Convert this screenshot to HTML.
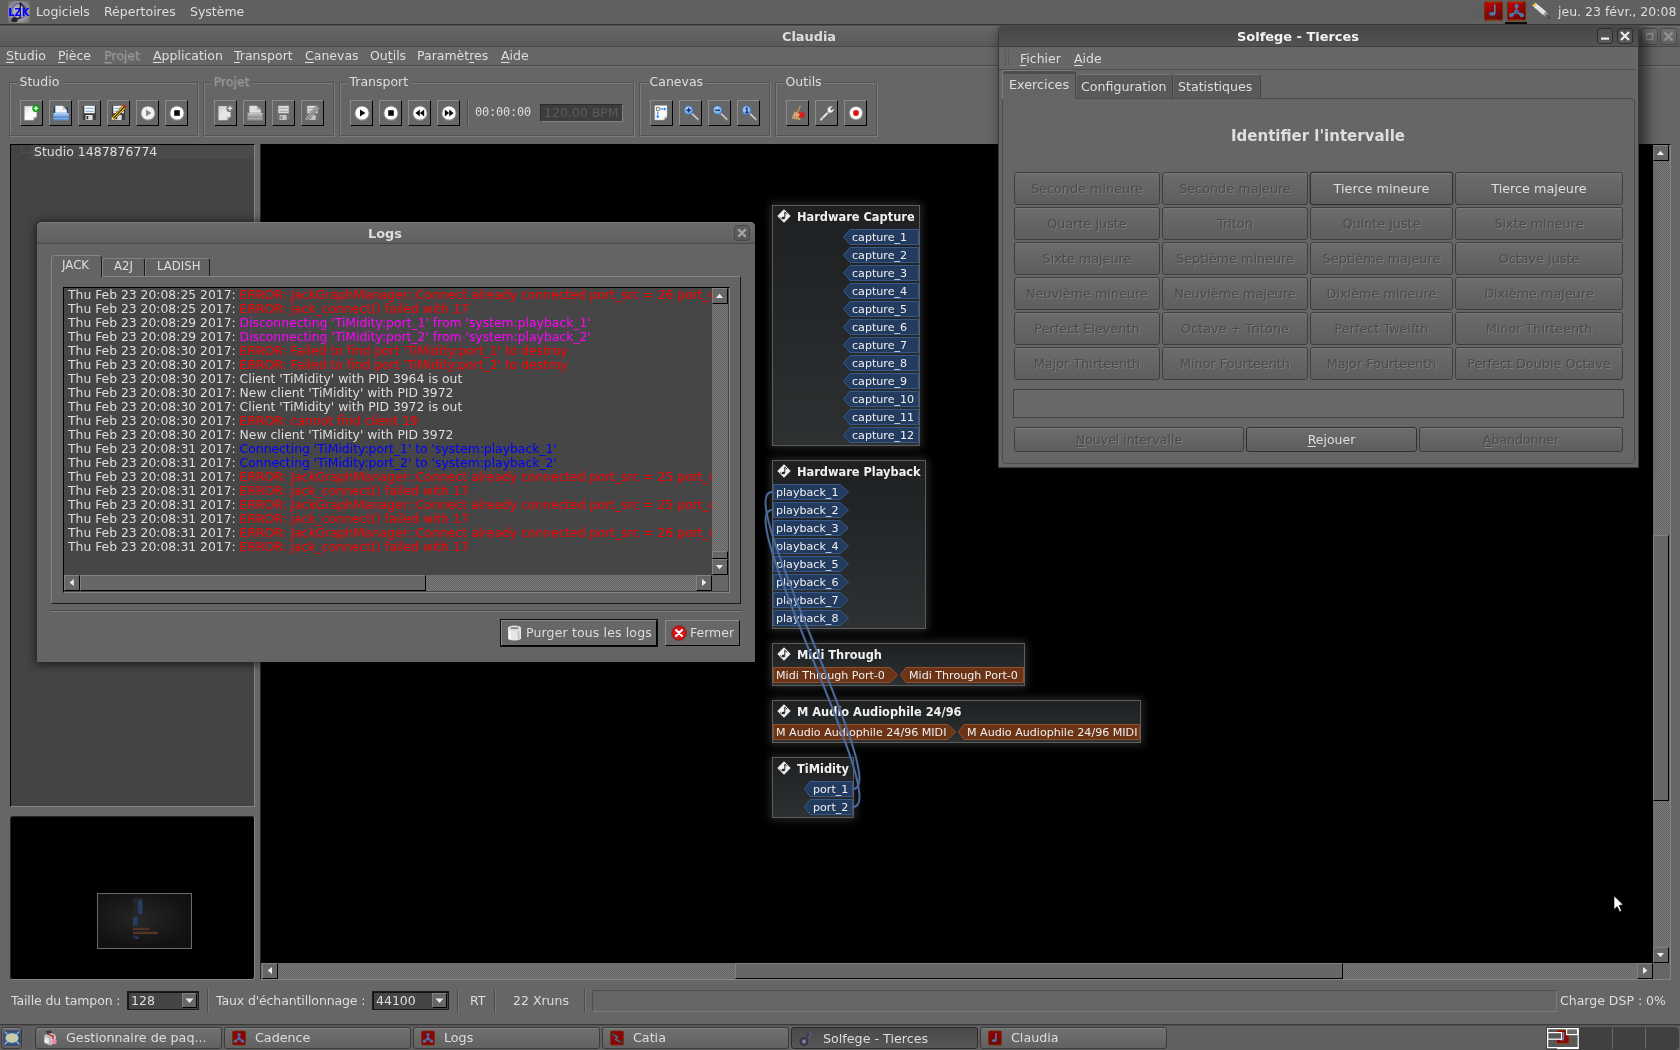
<!DOCTYPE html><html><head><meta charset="utf-8"><title>Claudia</title><style>
html,body{margin:0;padding:0;}
body{width:1680px;height:1050px;overflow:hidden;background:#666;position:relative;font-family:"DejaVu Sans","Liberation Sans",sans-serif;font-size:12.5px;color:#dedede;}
div,span.t,svg{position:absolute;box-sizing:border-box;}
span.t{white-space:nowrap;line-height:15px;height:15px;}
.dis2{color:#4a4a4a;text-shadow:1px 1px 0 #7e7e7e;}
.dis{color:#979797;text-shadow:1px 1px 0 #7c7c7c;}
u{text-decoration:underline;text-underline-offset:1.5px;text-decoration-thickness:1px;}
.b{font-weight:bold;}
.tb{border:1px solid;border-color:#8a8a8a #040404 #040404 #8a8a8a;background:#676767;}
.grp{border:1px solid #555;box-shadow:1px 1px 0 #7c7c7c, inset 1px 1px 0 #7c7c7c;}
.sunk{border:1px solid;border-color:#2a2a2a #8a8a8a #8a8a8a #2a2a2a;}
.trough{background-color:#6e6e6e;background-image:conic-gradient(#787878 25%,#666 0 50%,#787878 0 75%,#666 0);background-size:2px 2px;}
.sbtn{border:1px solid;border-color:#818181 #000 #000 #818181;background:#676767;}
.gbtn{border:1px solid #3e3e3e;border-radius:3px;background:linear-gradient(#6c6c6c,#5e5e5e);box-shadow:inset 0 1px 0 #7a7a7a;}
.task{border:1px solid #3a3a3a;border-radius:3px;background:linear-gradient(#707070,#626262);box-shadow:inset 0 1px 0 #808080;}
</style></head><body><div id="root" style="left:0;top:0;width:1680px;height:1050px;will-change:transform;">
<div style="left:0px;top:26px;width:1680px;height:20px;background:linear-gradient(#666,#5a5a5a);"></div>
<div style="left:0px;top:26px;width:1680px;height:1px;background:#6c6c6c;"></div>
<div style="left:0px;top:46px;width:1680px;height:1px;background:#474747;"></div>
<span class="t" style="left:709px;width:200px;text-align:center;top:29px;font-weight:bold;font-size:12.9px;">Claudia</span>
<div style="left:1641px;top:28px;width:17px;height:17px;border:1px solid #4a4a4a;border-radius:3px;background:linear-gradient(#707070,#606060);"></div>
<svg style="left:1641px;top:28px" width="17" height="17"><rect x="5.5" y="5.5" width="6" height="6" fill="none" stroke="#929292" stroke-width="1.4"/><rect x="5" y="5" width="7" height="2" fill="#929292"/></svg>
<div style="left:1660px;top:28px;width:17px;height:17px;border:1px solid #4a4a4a;border-radius:3px;background:linear-gradient(#707070,#606060);"></div>
<svg style="left:1660px;top:28px" width="17" height="17"><path d="M4.5 4.5 L12.5 12.5 M12.5 4.5 L4.5 12.5" stroke="#929292" stroke-width="2.4" fill="none"/></svg>
<div style="left:0px;top:47px;width:1680px;height:18px;background:#666;"></div>
<div style="left:0px;top:65px;width:1680px;height:1px;background:#4a4a4a;"></div>
<div style="left:0px;top:66px;width:1680px;height:1px;background:#727272;"></div>
<span class="t" style="left:6px;top:48px;"><u>S</u>tudio</span>
<span class="t" style="left:58px;top:48px;"><u>P</u>ièce</span>
<span class="t dis" style="left:104px;top:48px;"><u>P</u>rojet</span>
<span class="t" style="left:153px;top:48px;"><u>A</u>pplication</span>
<span class="t" style="left:234px;top:48px;"><u>T</u>ransport</span>
<span class="t" style="left:305px;top:48px;"><u>C</u>anevas</span>
<span class="t" style="left:370px;top:48px;">Ou<u>t</u>ils</span>
<span class="t" style="left:417px;top:48px;">Paramèt<u>r</u>es</span>
<span class="t" style="left:501px;top:48px;"><u>A</u>ide</span>
<div class="grp" style="left:9px;top:82px;width:189px;height:54px;"></div>
<span class="t" style="left:16.5px;top:74px;background:#666;padding:0 3px 0 3px;">Studio</span>
<div class="grp" style="left:203px;top:82px;width:131px;height:54px;"></div>
<span class="t dis" style="left:210.5px;top:74px;background:#666;padding:0 3px 0 3px;">Projet</span>
<div class="grp" style="left:339px;top:82px;width:295px;height:54px;"></div>
<span class="t" style="left:346.5px;top:74px;background:#666;padding:0 3px 0 3px;">Transport</span>
<div class="grp" style="left:639px;top:82px;width:131px;height:54px;"></div>
<span class="t" style="left:646.5px;top:74px;background:#666;padding:0 3px 0 3px;">Canevas</span>
<div class="grp" style="left:775px;top:82px;width:102px;height:54px;"></div>
<span class="t" style="left:782.5px;top:74px;background:#666;padding:0 3px 0 3px;">Outils</span>
<div class="tb" style="left:20px;top:100px;width:23px;height:26px;"></div>
<svg style="left:23.5px;top:105px;overflow:visible" width="16" height="16" viewBox="0 0 16 16"><defs><linearGradient id="pgfbfbfb" x1="0" y1="0" x2="1" y2="1"><stop offset="0" stop-color="#dcdcdc"/><stop offset="0.5" stop-color="#fbfbfb"/><stop offset="1" stop-color="#fbfbfb"/></linearGradient></defs>
<path d="M0.3 1 H12.8 V11.5 L9 15.3 H0.3 Z" fill="url(#pgfbfbfb)" stroke="#8a8a8a" stroke-width="0.4"/><path d="M12.8 11.5 L9 15.3 L9.4 12 Z" fill="#b8b8b8"/>
<circle cx="12" cy="3.4" r="3.5" fill="#12a812" stroke="#0c8a0c" stroke-width="0.5"/><path d="M9.8 3.4 H14.2 M12 1.2 V5.6" stroke="#fff" stroke-width="1.4"/></svg>
<div class="tb" style="left:49px;top:100px;width:23px;height:26px;"></div>
<svg style="left:52.5px;top:105px;overflow:visible" width="16" height="16" viewBox="0 0 16 16"><path d="M0.8 1.2 L2.2 1.2 L2.2 9 L15 9 L15 2.4 L12 2.4 L12 9 L0.8 9 Z" fill="#173f7c"/>
<path d="M2.4 0.8 H9.6 L13.8 5 V9.5 H2.4 Z" fill="#f4f4f4"/><path d="M9.6 0.8 V5 H13.8 Z" fill="#cfcfcf"/>
<path d="M0.6 8.6 L3 7.4 H13 L15.6 8.6 V15.2 H0.6 Z" fill="#86b0e6"/><path d="M0.6 8.8 H15.6" stroke="#b8d4f4" stroke-width="1.2"/><path d="M0.6 12.2 H15.6" stroke="#3f78c4" stroke-width="1"/>
<path d="M0.6 14.8 H15.6" stroke="#3f78c4" stroke-width="0.8"/></svg>
<div class="tb" style="left:78px;top:100px;width:23px;height:26px;"></div>
<svg style="left:81.5px;top:105px;overflow:visible" width="16" height="16" viewBox="0 0 16 16"><path d="M0.8 2 Q0.8 0.8 2 0.8 H13 Q14.2 0.8 14.2 2 V13.8 Q14.2 15 13 15 H2 Q0.8 15 0.8 13.8 Z" fill="#3e3e3e"/>
<rect x="2.3" y="0.8" width="10.4" height="7.4" fill="#f4f8fe"/><path d="M3.4 3.3 H11.6 M3.4 6.3 H11.6" stroke="#7c9cc6" stroke-width="0.9"/>
<rect x="3.6" y="10" width="7" height="5" fill="#dcdcdc"/><rect x="4.6" y="11" width="1.6" height="3.2" fill="#2e2e2e"/></svg>
<div class="tb" style="left:107px;top:100px;width:23px;height:26px;"></div>
<svg style="left:110.5px;top:105px;overflow:visible" width="16" height="16" viewBox="0 0 16 16"><path d="M0.8 2 Q0.8 0.8 2 0.8 H13 Q14.2 0.8 14.2 2 V13.8 Q14.2 15 13 15 H2 Q0.8 15 0.8 13.8 Z" fill="#3e3e3e"/>
<rect x="2.3" y="0.8" width="10.4" height="7.4" fill="#f4f8fe"/><path d="M3.4 3.3 H11.6 M3.4 6.3 H11.6" stroke="#7c9cc6" stroke-width="0.9"/>
<rect x="3.6" y="10" width="7" height="5" fill="#dcdcdc"/><rect x="4.6" y="11" width="1.6" height="3.2" fill="#2e2e2e"/><path d="M-0.2 15.6 L1 12.2 L11.8 0.6 L14.6 3.2 L3.6 14.6 Z" fill="#f4c41c" stroke="#4a3a06" stroke-width="0.7"/><path d="M2.4 13.4 L13.2 1.9" stroke="#1e1e1e" stroke-width="1.1"/><path d="M11.8 0.6 L12.6 -0.2 Q14.6 -0.6 15.4 1.6 L14.6 3.2 Z" fill="#e01818"/><path d="M-0.2 15.6 L1 12.2 L3.6 14.6 Z" fill="#ecd0a4"/><path d="M-0.2 15.6 L0.3 14.2 L1.2 15.1 Z" fill="#222"/></svg>
<div class="tb" style="left:136px;top:100px;width:23px;height:26px;"></div>
<svg style="left:139.5px;top:105px;overflow:visible" width="16" height="16" viewBox="0 0 16 16"><circle cx="8" cy="8.4" r="7.6" fill="#9c9c9c" opacity="0.5"/><circle cx="8" cy="8" r="6.6" fill="#f2f2f2"/><path d="M6 4.4 L11.4 8 L6 11.6 Z" fill="#8c8c8c"/></svg>
<div class="tb" style="left:165px;top:100px;width:23px;height:26px;"></div>
<svg style="left:168.5px;top:105px;overflow:visible" width="16" height="16" viewBox="0 0 16 16"><circle cx="8" cy="8.4" r="7.6" fill="#a8a8a8" opacity="0.5"/><circle cx="8" cy="8" r="6.6" fill="#fff"/><rect x="5.2" y="5.2" width="5.6" height="5.6" fill="#0c0c0c"/></svg>
<div class="tb" style="left:214px;top:100px;width:23px;height:26px;"></div>
<svg style="left:217.5px;top:105px;overflow:visible" width="16" height="16" viewBox="0 0 16 16"><defs><linearGradient id="pge6e6e6" x1="0" y1="0" x2="1" y2="1"><stop offset="0" stop-color="#cfcfcf"/><stop offset="0.5" stop-color="#e6e6e6"/><stop offset="1" stop-color="#e6e6e6"/></linearGradient></defs>
<path d="M0.3 1 H12.8 V11.5 L9 15.3 H0.3 Z" fill="url(#pge6e6e6)" stroke="#8a8a8a" stroke-width="0.4"/><path d="M12.8 11.5 L9 15.3 L9.4 12 Z" fill="#a8a8a8"/>
<circle cx="12" cy="3.4" r="3.5" fill="#7a7a7a" stroke="#707070" stroke-width="0.5"/><path d="M9.8 3.4 H14.2 M12 1.2 V5.6" stroke="#e8e8e8" stroke-width="1.4"/></svg>
<div class="tb" style="left:243px;top:100px;width:23px;height:26px;"></div>
<svg style="left:246.5px;top:105px;overflow:visible" width="16" height="16" viewBox="0 0 16 16"><path d="M0.8 1.2 L2.2 1.2 L2.2 9 L15 9 L15 2.4 L12 2.4 L12 9 L0.8 9 Z" fill="#6c6c6c"/>
<path d="M2.4 0.8 H9.6 L13.8 5 V9.5 H2.4 Z" fill="#e0e0e0"/><path d="M9.6 0.8 V5 H13.8 Z" fill="#b8b8b8"/>
<path d="M0.6 8.6 L3 7.4 H13 L15.6 8.6 V15.2 H0.6 Z" fill="#a8a8a8"/><path d="M0.6 8.8 H15.6" stroke="#c8c8c8" stroke-width="1.2"/><path d="M0.6 12.2 H15.6" stroke="#888" stroke-width="1"/>
<path d="M0.6 14.8 H15.6" stroke="#888" stroke-width="0.8"/></svg>
<div class="tb" style="left:272px;top:100px;width:23px;height:26px;"></div>
<svg style="left:275.5px;top:105px;overflow:visible" width="16" height="16" viewBox="0 0 16 16"><path d="M0.8 2 Q0.8 0.8 2 0.8 H13 Q14.2 0.8 14.2 2 V13.8 Q14.2 15 13 15 H2 Q0.8 15 0.8 13.8 Z" fill="#707070"/>
<rect x="2.3" y="0.8" width="10.4" height="7.4" fill="#dadada"/><path d="M3.4 3.3 H11.6 M3.4 6.3 H11.6" stroke="#9c9c9c" stroke-width="0.9"/>
<rect x="3.6" y="10" width="7" height="5" fill="#c4c4c4"/><rect x="4.6" y="11" width="1.6" height="3.2" fill="#7c7c7c"/></svg>
<div class="tb" style="left:301px;top:100px;width:23px;height:26px;"></div>
<svg style="left:304.5px;top:105px;overflow:visible" width="16" height="16" viewBox="0 0 16 16"><path d="M0.8 2 Q0.8 0.8 2 0.8 H13 Q14.2 0.8 14.2 2 V13.8 Q14.2 15 13 15 H2 Q0.8 15 0.8 13.8 Z" fill="#707070"/>
<rect x="2.3" y="0.8" width="10.4" height="7.4" fill="#dadada"/><path d="M3.4 3.3 H11.6 M3.4 6.3 H11.6" stroke="#9c9c9c" stroke-width="0.9"/>
<rect x="3.6" y="10" width="7" height="5" fill="#c4c4c4"/><rect x="4.6" y="11" width="1.6" height="3.2" fill="#7c7c7c"/><path d="M-0.2 15.6 L1 12.2 L11.8 0.6 L14.6 3.2 L3.6 14.6 Z" fill="#b0b0b0" stroke="#6a6a6a" stroke-width="0.7"/><path d="M2.4 13.4 L13.2 1.9" stroke="#7c7c7c" stroke-width="1.1"/></svg>
<div class="tb" style="left:350px;top:100px;width:23px;height:26px;"></div>
<svg style="left:353.5px;top:105px;overflow:visible" width="16" height="16" viewBox="0 0 16 16"><circle cx="8" cy="8.4" r="7.6" fill="#a8a8a8" opacity="0.5"/><circle cx="8" cy="8" r="6.6" fill="#fff"/><path d="M6 4.4 L11.4 8 L6 11.6 Z" fill="#0c0c0c"/></svg>
<div class="tb" style="left:379px;top:100px;width:23px;height:26px;"></div>
<svg style="left:382.5px;top:105px;overflow:visible" width="16" height="16" viewBox="0 0 16 16"><circle cx="8" cy="8.4" r="7.6" fill="#a8a8a8" opacity="0.5"/><circle cx="8" cy="8" r="6.6" fill="#fff"/><rect x="5.2" y="5.2" width="5.6" height="5.6" fill="#0c0c0c"/></svg>
<div class="tb" style="left:408px;top:100px;width:23px;height:26px;"></div>
<svg style="left:411.5px;top:105px;overflow:visible" width="16" height="16" viewBox="0 0 16 16"><circle cx="8" cy="8.4" r="7.6" fill="#a8a8a8" opacity="0.5"/><circle cx="8" cy="8" r="6.6" fill="#fff"/><path d="M7.8 4.6 L3.4 8 L7.8 11.4 Z M12.2 4.6 L7.8 8 L12.2 11.4 Z" fill="#0c0c0c"/></svg>
<div class="tb" style="left:437px;top:100px;width:23px;height:26px;"></div>
<svg style="left:440.5px;top:105px;overflow:visible" width="16" height="16" viewBox="0 0 16 16"><circle cx="8" cy="8.4" r="7.6" fill="#a8a8a8" opacity="0.5"/><circle cx="8" cy="8" r="6.6" fill="#fff"/><path d="M3.8 4.6 L8.2 8 L3.8 11.4 Z M8.2 4.6 L12.6 8 L8.2 11.4 Z" fill="#0c0c0c"/></svg>
<div style="left:467px;top:100px;width:1px;height:26px;background:#4a4a4a;"></div>
<div style="left:468px;top:100px;width:1px;height:26px;background:#7a7a7a;"></div>
<span class="t" style="left:475px;top:105px;font-family:'DejaVu Sans Mono','Liberation Mono',monospace;font-size:12px;letter-spacing:-0.22px;">00:00:00</span>
<div style="left:540px;top:104px;width:83px;height:18px;background:#3d3d3d;border:1px solid;border-color:#2c2c2c #808080 #808080 #2c2c2c;"></div>
<span class="t" style="left:544px;top:105px;color:#5c5c5c;">120,00 BPM</span>
<div class="tb" style="left:650px;top:100px;width:23px;height:26px;"></div>
<svg style="left:653.5px;top:105px;overflow:visible" width="16" height="16" viewBox="0 0 16 16"><path d="M0.8 0.6 H13 V11.6 L9.8 15 H0.8 Z" fill="#fafafa" stroke="#b4b4b4" stroke-width="0.5"/><path d="M13 11.6 H9.8 V15 Z" fill="#cfcfcf"/>
<rect x="2.4" y="2.6" width="2.8" height="2.8" fill="none" stroke="#707070" stroke-width="0.8"/>
<path d="M6 4 H11" stroke="#1a78f0" stroke-width="1"/><path d="M10 2.4 L12.4 4 L10 5.6 Z" fill="#1a78f0"/>
<path d="M3.8 6.4 V12" stroke="#1a78f0" stroke-width="1"/><path d="M2.2 11 L3.8 13.4 L5.4 11 Z" fill="#1a78f0"/></svg>
<div class="tb" style="left:679px;top:100px;width:23px;height:26px;"></div>
<svg style="left:682.5px;top:105px;overflow:visible" width="16" height="16" viewBox="0 0 16 16"><defs><radialGradient id="zg" cx="40%" cy="35%" r="70%"><stop offset="0" stop-color="#b8d8f6"/><stop offset="1" stop-color="#5e9ad8"/></radialGradient></defs>
<path d="M9 8.8 L15 14.6" stroke="#808080" stroke-width="2.4" stroke-linecap="round"/><path d="M9 8.6 L14.8 14.2" stroke="#e4e4e4" stroke-width="1.1" stroke-linecap="round"/>
<circle cx="5.6" cy="5.2" r="4.5" fill="url(#zg)" stroke="#3868a8" stroke-width="0.9"/><path d="M3.2 5.2 H8 M5.6 2.8 V7.6" stroke="#0c3472" stroke-width="1.4"/></svg>
<div class="tb" style="left:708px;top:100px;width:23px;height:26px;"></div>
<svg style="left:711.5px;top:105px;overflow:visible" width="16" height="16" viewBox="0 0 16 16"><defs><radialGradient id="zg" cx="40%" cy="35%" r="70%"><stop offset="0" stop-color="#b8d8f6"/><stop offset="1" stop-color="#5e9ad8"/></radialGradient></defs>
<path d="M9 8.8 L15 14.6" stroke="#808080" stroke-width="2.4" stroke-linecap="round"/><path d="M9 8.6 L14.8 14.2" stroke="#e4e4e4" stroke-width="1.1" stroke-linecap="round"/>
<circle cx="5.6" cy="5.2" r="4.5" fill="url(#zg)" stroke="#3868a8" stroke-width="0.9"/><path d="M3.2 5.2 H8" stroke="#0c3472" stroke-width="1.4"/></svg>
<div class="tb" style="left:737px;top:100px;width:23px;height:26px;"></div>
<svg style="left:740.5px;top:105px;overflow:visible" width="16" height="16" viewBox="0 0 16 16"><defs><radialGradient id="zg" cx="40%" cy="35%" r="70%"><stop offset="0" stop-color="#b8d8f6"/><stop offset="1" stop-color="#5e9ad8"/></radialGradient></defs>
<path d="M9 8.8 L15 14.6" stroke="#808080" stroke-width="2.4" stroke-linecap="round"/><path d="M9 8.6 L14.8 14.2" stroke="#e4e4e4" stroke-width="1.1" stroke-linecap="round"/>
<circle cx="5.6" cy="5.2" r="4.5" fill="url(#zg)" stroke="#3868a8" stroke-width="0.9"/><path d="M4.5 4 L5.9 3 V7.4 M4.4 7.5 H7.4" stroke="#0c3472" stroke-width="1.3" fill="none"/></svg>
<div class="tb" style="left:786px;top:100px;width:23px;height:26px;"></div>
<svg style="left:789.5px;top:105px;overflow:visible" width="16" height="16" viewBox="0 0 16 16"><path d="M9.6 0.2 L11.2 0.8 L8.4 8 L6.8 7.4 Z" fill="#b98a52"/><path d="M4.6 6.6 L10 8.6 L9.6 10.4 L10.4 15 L1.6 13.8 Q1 13 3 10 Z" fill="#cfa878"/><path d="M3.4 11 L2.8 13.8 M5.6 11.4 L5.2 14.2 M7.8 11.8 L7.6 14.6" stroke="#9a7444" stroke-width="0.7"/>
<path d="M9.2 7.2 L14.4 12.4 M14.4 7.2 L9.2 12.4" stroke="#e41818" stroke-width="2.2"/></svg>
<div class="tb" style="left:815px;top:100px;width:23px;height:26px;"></div>
<svg style="left:818.5px;top:105px;overflow:visible" width="16" height="16" viewBox="0 0 16 16"><path d="M2 14.6 L9.4 7" stroke="#5a5a5a" stroke-width="3.6" stroke-linecap="round"/><path d="M2 14.6 L9.4 7" stroke="#e8e8e8" stroke-width="2.2" stroke-linecap="round"/>
<path d="M8.4 7.6 Q7.2 3.8 10 1.6 Q12.2 0.4 14.2 1.2 L11.6 3.8 L12.6 5.2 L15.2 2.8 Q15.8 5.6 13.8 7.2 Q11.4 9 8.4 7.6 Z" fill="#f0f0f0" stroke="#5a5a5a" stroke-width="0.7"/>
<path d="M2.4 14.2 L4.6 12" stroke="#9a9a9a" stroke-width="1"/></svg>
<div class="tb" style="left:844px;top:100px;width:23px;height:26px;"></div>
<svg style="left:847.5px;top:105px;overflow:visible" width="16" height="16" viewBox="0 0 16 16"><circle cx="8" cy="8.3" r="7" fill="#b0b0b0" opacity="0.5"/><circle cx="8" cy="8" r="6.2" fill="#fbfbfb"/><circle cx="8" cy="8" r="2.9" fill="#e01010"/></svg>
<div style="left:10px;top:144px;width:245px;height:663px;background:#444;border:1px solid;border-color:#000 #868686 #868686 #000;"></div>
<div style="left:31px;top:145px;width:223px;height:14px;background:#4a4a4a;"></div>
<span class="t" style="left:34px;top:144px;">Studio 1487876774</span>
<svg style="left:18px;top:146px" width="14" height="12"><path d="M3.5 0 V6.5 H12" stroke="#585858" stroke-dasharray="1 1" fill="none"/></svg>
<div style="left:10px;top:816px;width:245px;height:164px;background:#000;border:1px solid;border-color:#262626 #868686 #868686 #262626;border-radius:3px;"></div>
<div style="left:97px;top:893px;width:95px;height:56px;background:#141414;border:1px solid #6a6a6a;"></div>
<svg style="left:98px;top:894px" width="93" height="54" viewBox="0 0 93 54">
<defs><radialGradient id="mg" cx="45%" cy="45%" r="55%"><stop offset="0" stop-color="#262626"/><stop offset="1" stop-color="#121212"/></radialGradient></defs>
<rect width="93" height="54" fill="url(#mg)"/><g opacity="0.7">
<rect x="35" y="4" width="9.5" height="16" fill="#262a2c"/><rect x="40" y="6" width="4.5" height="14" fill="#2b4a7c"/>
<rect x="35" y="21" width="10" height="11" fill="#262a2c"/><rect x="35" y="23" width="4.5" height="9" fill="#2b4a7c"/>
<rect x="35" y="33" width="16.5" height="3" fill="#2a2c2c"/><rect x="35" y="34.5" width="16.5" height="1.3" fill="#8a4520"/>
<rect x="35" y="37" width="24.5" height="3" fill="#2a2c2c"/><rect x="35" y="38.5" width="24.5" height="1.3" fill="#9a4c22"/>
<rect x="35" y="41" width="5.5" height="4" fill="#262a2c"/><rect x="37" y="42.5" width="3.5" height="2.5" fill="#2b4a7c"/>
</g></svg>
<div style="left:260px;top:144px;width:1411px;height:836px;background:#000;border:1px solid;border-color:#000 #868686 #868686 #2a2a2a;"></div>
<div class="trough" style="left:1653px;top:145px;width:17px;height:818px;"></div>
<div class="sbtn" style="left:1653px;top:145px;width:16px;height:16px;"></div>
<svg style="left:1653px;top:145px" width="16" height="16"><path d="M4 10 L7.5 5.7 L11 10 Z" fill="#ececec"/></svg>
<div class="sbtn" style="left:1653px;top:947px;width:16px;height:16px;"></div>
<svg style="left:1653px;top:947px" width="16" height="16"><path d="M4 6 L7.5 10.3 L11 6 Z" fill="#ececec"/></svg>
<div class="sbtn" style="left:1653px;top:535px;width:16px;height:266px;"></div>
<div class="trough" style="left:261px;top:963px;width:1392px;height:16px;"></div>
<div class="sbtn" style="left:262px;top:963px;width:16px;height:16px;"></div>
<svg style="left:262px;top:963px" width="16" height="16"><path d="M10 4 L5.7 7.5 L10 11 Z" fill="#ececec"/></svg>
<div class="sbtn" style="left:1637px;top:963px;width:16px;height:16px;"></div>
<svg style="left:1637px;top:963px" width="16" height="16"><path d="M6 4 L10.3 7.5 L6 11 Z" fill="#ececec"/></svg>
<div class="sbtn" style="left:735px;top:963px;width:608px;height:16px;"></div>
<div style="left:1653px;top:963px;width:17px;height:16px;background:#666;"></div>
<div style="left:772px;top:205px;width:148px;height:241px;background:linear-gradient(#1e2022,#2d3132);border:1px solid #5c5c5c;box-shadow:0 0 8px 2px rgba(130,130,130,0.30);"></div>
<svg style="left:777px;top:209px" width="14" height="14" viewBox="0 0 14 14"><path d="M7 0.3 L13.7 7 L7 13.7 L0.3 7 Z" fill="#f0f0f0"/><path d="M7.8 3.2 V8.6 M7.8 3.2 L10 5.2" stroke="#222" stroke-width="1" fill="none"/><ellipse cx="6.4" cy="9" rx="1.7" ry="1.3" fill="#222"/><path d="M3.2 8.2 L5 10.4" stroke="#555" stroke-width="0.8"/></svg>
<span class="t b" style="left:797px;top:210px;font-size:11.4px;color:#f0f0f0;">Hardware Capture</span>
<svg style="left:842px;top:229px" width="78" height="16"><path d="M8 0.5 H76.5 V15.5 H8 L1.5 8.0 Z" fill="#243b60" stroke="#38588a" stroke-width="1"/></svg>
<span class="t" style="left:852px;top:230px;font-size:11.1px;color:#f0f0f0;line-height:16px;height:16px;">capture_1</span>
<svg style="left:842px;top:247px" width="78" height="16"><path d="M8 0.5 H76.5 V15.5 H8 L1.5 8.0 Z" fill="#243b60" stroke="#38588a" stroke-width="1"/></svg>
<span class="t" style="left:852px;top:248px;font-size:11.1px;color:#f0f0f0;line-height:16px;height:16px;">capture_2</span>
<svg style="left:842px;top:265px" width="78" height="16"><path d="M8 0.5 H76.5 V15.5 H8 L1.5 8.0 Z" fill="#243b60" stroke="#38588a" stroke-width="1"/></svg>
<span class="t" style="left:852px;top:266px;font-size:11.1px;color:#f0f0f0;line-height:16px;height:16px;">capture_3</span>
<svg style="left:842px;top:283px" width="78" height="16"><path d="M8 0.5 H76.5 V15.5 H8 L1.5 8.0 Z" fill="#243b60" stroke="#38588a" stroke-width="1"/></svg>
<span class="t" style="left:852px;top:284px;font-size:11.1px;color:#f0f0f0;line-height:16px;height:16px;">capture_4</span>
<svg style="left:842px;top:301px" width="78" height="16"><path d="M8 0.5 H76.5 V15.5 H8 L1.5 8.0 Z" fill="#243b60" stroke="#38588a" stroke-width="1"/></svg>
<span class="t" style="left:852px;top:302px;font-size:11.1px;color:#f0f0f0;line-height:16px;height:16px;">capture_5</span>
<svg style="left:842px;top:319px" width="78" height="16"><path d="M8 0.5 H76.5 V15.5 H8 L1.5 8.0 Z" fill="#243b60" stroke="#38588a" stroke-width="1"/></svg>
<span class="t" style="left:852px;top:320px;font-size:11.1px;color:#f0f0f0;line-height:16px;height:16px;">capture_6</span>
<svg style="left:842px;top:337px" width="78" height="16"><path d="M8 0.5 H76.5 V15.5 H8 L1.5 8.0 Z" fill="#243b60" stroke="#38588a" stroke-width="1"/></svg>
<span class="t" style="left:852px;top:338px;font-size:11.1px;color:#f0f0f0;line-height:16px;height:16px;">capture_7</span>
<svg style="left:842px;top:355px" width="78" height="16"><path d="M8 0.5 H76.5 V15.5 H8 L1.5 8.0 Z" fill="#243b60" stroke="#38588a" stroke-width="1"/></svg>
<span class="t" style="left:852px;top:356px;font-size:11.1px;color:#f0f0f0;line-height:16px;height:16px;">capture_8</span>
<svg style="left:842px;top:373px" width="78" height="16"><path d="M8 0.5 H76.5 V15.5 H8 L1.5 8.0 Z" fill="#243b60" stroke="#38588a" stroke-width="1"/></svg>
<span class="t" style="left:852px;top:374px;font-size:11.1px;color:#f0f0f0;line-height:16px;height:16px;">capture_9</span>
<svg style="left:842px;top:391px" width="78" height="16"><path d="M8 0.5 H76.5 V15.5 H8 L1.5 8.0 Z" fill="#243b60" stroke="#38588a" stroke-width="1"/></svg>
<span class="t" style="left:852px;top:392px;font-size:11.1px;color:#f0f0f0;line-height:16px;height:16px;">capture_10</span>
<svg style="left:842px;top:409px" width="78" height="16"><path d="M8 0.5 H76.5 V15.5 H8 L1.5 8.0 Z" fill="#243b60" stroke="#38588a" stroke-width="1"/></svg>
<span class="t" style="left:852px;top:410px;font-size:11.1px;color:#f0f0f0;line-height:16px;height:16px;">capture_11</span>
<svg style="left:842px;top:427px" width="78" height="16"><path d="M8 0.5 H76.5 V15.5 H8 L1.5 8.0 Z" fill="#243b60" stroke="#38588a" stroke-width="1"/></svg>
<span class="t" style="left:852px;top:428px;font-size:11.1px;color:#f0f0f0;line-height:16px;height:16px;">capture_12</span>
<div style="left:772px;top:460px;width:154px;height:169px;background:linear-gradient(#1e2022,#2d3132);border:1px solid #5c5c5c;box-shadow:0 0 8px 2px rgba(130,130,130,0.30);"></div>
<svg style="left:777px;top:464px" width="14" height="14" viewBox="0 0 14 14"><path d="M7 0.3 L13.7 7 L7 13.7 L0.3 7 Z" fill="#f0f0f0"/><path d="M7.8 3.2 V8.6 M7.8 3.2 L10 5.2" stroke="#222" stroke-width="1" fill="none"/><ellipse cx="6.4" cy="9" rx="1.7" ry="1.3" fill="#222"/><path d="M3.2 8.2 L5 10.4" stroke="#555" stroke-width="0.8"/></svg>
<span class="t b" style="left:797px;top:465px;font-size:11.4px;color:#f0f0f0;">Hardware Playback</span>
<svg style="left:773px;top:484px" width="78" height="16"><path d="M0.5 0.5 H67 L75.5 8.0 L67 15.5 H0.5 Z" fill="#243b60" stroke="#38588a" stroke-width="1"/></svg>
<span class="t" style="left:776px;top:485px;font-size:11.1px;color:#f0f0f0;line-height:16px;height:16px;">playback_1</span>
<svg style="left:773px;top:502px" width="78" height="16"><path d="M0.5 0.5 H67 L75.5 8.0 L67 15.5 H0.5 Z" fill="#243b60" stroke="#38588a" stroke-width="1"/></svg>
<span class="t" style="left:776px;top:503px;font-size:11.1px;color:#f0f0f0;line-height:16px;height:16px;">playback_2</span>
<svg style="left:773px;top:520px" width="78" height="16"><path d="M0.5 0.5 H67 L75.5 8.0 L67 15.5 H0.5 Z" fill="#243b60" stroke="#38588a" stroke-width="1"/></svg>
<span class="t" style="left:776px;top:521px;font-size:11.1px;color:#f0f0f0;line-height:16px;height:16px;">playback_3</span>
<svg style="left:773px;top:538px" width="78" height="16"><path d="M0.5 0.5 H67 L75.5 8.0 L67 15.5 H0.5 Z" fill="#243b60" stroke="#38588a" stroke-width="1"/></svg>
<span class="t" style="left:776px;top:539px;font-size:11.1px;color:#f0f0f0;line-height:16px;height:16px;">playback_4</span>
<svg style="left:773px;top:556px" width="78" height="16"><path d="M0.5 0.5 H67 L75.5 8.0 L67 15.5 H0.5 Z" fill="#243b60" stroke="#38588a" stroke-width="1"/></svg>
<span class="t" style="left:776px;top:557px;font-size:11.1px;color:#f0f0f0;line-height:16px;height:16px;">playback_5</span>
<svg style="left:773px;top:574px" width="78" height="16"><path d="M0.5 0.5 H67 L75.5 8.0 L67 15.5 H0.5 Z" fill="#243b60" stroke="#38588a" stroke-width="1"/></svg>
<span class="t" style="left:776px;top:575px;font-size:11.1px;color:#f0f0f0;line-height:16px;height:16px;">playback_6</span>
<svg style="left:773px;top:592px" width="78" height="16"><path d="M0.5 0.5 H67 L75.5 8.0 L67 15.5 H0.5 Z" fill="#243b60" stroke="#38588a" stroke-width="1"/></svg>
<span class="t" style="left:776px;top:593px;font-size:11.1px;color:#f0f0f0;line-height:16px;height:16px;">playback_7</span>
<svg style="left:773px;top:610px" width="78" height="16"><path d="M0.5 0.5 H67 L75.5 8.0 L67 15.5 H0.5 Z" fill="#243b60" stroke="#38588a" stroke-width="1"/></svg>
<span class="t" style="left:776px;top:611px;font-size:11.1px;color:#f0f0f0;line-height:16px;height:16px;">playback_8</span>
<div style="left:772px;top:643px;width:253px;height:43px;background:linear-gradient(#1e2022,#2d3132);border:1px solid #5c5c5c;box-shadow:0 0 8px 2px rgba(130,130,130,0.30);"></div>
<svg style="left:777px;top:647px" width="14" height="14" viewBox="0 0 14 14"><path d="M7 0.3 L13.7 7 L7 13.7 L0.3 7 Z" fill="#f0f0f0"/><path d="M7.8 3.2 V8.6 M7.8 3.2 L10 5.2" stroke="#222" stroke-width="1" fill="none"/><ellipse cx="6.4" cy="9" rx="1.7" ry="1.3" fill="#222"/><path d="M3.2 8.2 L5 10.4" stroke="#555" stroke-width="0.8"/></svg>
<span class="t b" style="left:797px;top:648px;font-size:11.4px;color:#f0f0f0;">Midi Through</span>
<svg style="left:773px;top:667px" width="127" height="16"><path d="M0.5 0.5 H117 L124.5 8.0 L117 15.5 H0.5 Z" fill="#6b3417" stroke="#93502a" stroke-width="1"/></svg>
<span class="t" style="left:776px;top:668px;font-size:11.1px;color:#f0f0f0;line-height:16px;height:16px;">Midi Through Port-0</span>
<svg style="left:899px;top:667px" width="126" height="16"><path d="M7 0.5 H124.5 V15.5 H7 L1.5 8.0 Z" fill="#6b3417" stroke="#93502a" stroke-width="1"/></svg>
<span class="t" style="left:909px;top:668px;font-size:11.1px;color:#f0f0f0;line-height:16px;height:16px;">Midi Through Port-0</span>
<div style="left:772px;top:700px;width:369px;height:43px;background:linear-gradient(#1e2022,#2d3132);border:1px solid #5c5c5c;box-shadow:0 0 8px 2px rgba(130,130,130,0.30);"></div>
<svg style="left:777px;top:704px" width="14" height="14" viewBox="0 0 14 14"><path d="M7 0.3 L13.7 7 L7 13.7 L0.3 7 Z" fill="#f0f0f0"/><path d="M7.8 3.2 V8.6 M7.8 3.2 L10 5.2" stroke="#222" stroke-width="1" fill="none"/><ellipse cx="6.4" cy="9" rx="1.7" ry="1.3" fill="#222"/><path d="M3.2 8.2 L5 10.4" stroke="#555" stroke-width="0.8"/></svg>
<span class="t b" style="left:797px;top:705px;font-size:11.4px;color:#f0f0f0;">M Audio Audiophile 24/96</span>
<svg style="left:773px;top:724px" width="185" height="16"><path d="M0.5 0.5 H175 L182.5 8.0 L175 15.5 H0.5 Z" fill="#6b3417" stroke="#93502a" stroke-width="1"/></svg>
<span class="t" style="left:776px;top:725px;font-size:11.1px;color:#f0f0f0;line-height:16px;height:16px;">M Audio Audiophile 24/96 MIDI</span>
<svg style="left:957px;top:724px" width="184" height="16"><path d="M7 0.5 H182.5 V15.5 H7 L1.5 8.0 Z" fill="#6b3417" stroke="#93502a" stroke-width="1"/></svg>
<span class="t" style="left:967px;top:725px;font-size:11.1px;color:#f0f0f0;line-height:16px;height:16px;">M Audio Audiophile 24/96 MIDI</span>
<div style="left:772px;top:757px;width:82px;height:61px;background:linear-gradient(#1e2022,#2d3132);border:1px solid #5c5c5c;box-shadow:0 0 8px 2px rgba(130,130,130,0.30);"></div>
<svg style="left:777px;top:761px" width="14" height="14" viewBox="0 0 14 14"><path d="M7 0.3 L13.7 7 L7 13.7 L0.3 7 Z" fill="#f0f0f0"/><path d="M7.8 3.2 V8.6 M7.8 3.2 L10 5.2" stroke="#222" stroke-width="1" fill="none"/><ellipse cx="6.4" cy="9" rx="1.7" ry="1.3" fill="#222"/><path d="M3.2 8.2 L5 10.4" stroke="#555" stroke-width="0.8"/></svg>
<span class="t b" style="left:797px;top:762px;font-size:11.4px;color:#f0f0f0;">TiMidity</span>
<svg style="left:803px;top:781px" width="51" height="16"><path d="M7 0.5 H49.5 V15.5 H7 L1.5 8.0 Z" fill="#243b60" stroke="#38588a" stroke-width="1"/></svg>
<span class="t" style="left:813px;top:782px;font-size:11.1px;color:#f0f0f0;line-height:16px;height:16px;">port_1</span>
<svg style="left:803px;top:799px" width="51" height="16"><path d="M7 0.5 H49.5 V15.5 H7 L1.5 8.0 Z" fill="#243b60" stroke="#38588a" stroke-width="1"/></svg>
<span class="t" style="left:813px;top:800px;font-size:11.1px;color:#f0f0f0;line-height:16px;height:16px;">port_2</span>
<svg style="left:700px;top:440px" width="240" height="420" viewBox="700 440 240 420"><g fill="none" stroke="#4a6a9c" stroke-width="2">
<path d="M853 789 C893 789 732 492 772 492"/><path d="M853 807 C893 807 732 510 772 510"/></g></svg>
<svg style="left:1612px;top:894px" width="14" height="22" viewBox="0 0 14 22"><path d="M2 1.8 V15.4 L5.2 12.6 L7.7 17.8 L9.6 16.9 L7.2 11.4 L11.2 10.8 Z" fill="#fafafa" stroke="#000" stroke-width="0.6"/></svg>
<div style="left:37px;top:222px;width:718px;height:440px;background:#646464;border-radius:5px 5px 0 0;box-shadow:0 1px 8px 2px rgba(0,0,0,0.55);"></div>
<div style="left:37px;top:222px;width:718px;height:22px;background:linear-gradient(#6c6c6c,#5f5f5f);border-radius:5px 5px 0 0;box-shadow:inset 0 1px 0 #7a7a7a;"></div>
<div style="left:37px;top:243px;width:718px;height:1px;background:#4a4a4a;"></div>
<span class="t" style="left:285px;width:200px;text-align:center;top:226px;font-weight:bold;font-size:12.9px;">Logs</span>
<div style="left:734px;top:225px;width:16px;height:16px;border:1px solid #474747;border-radius:3.5px;background:linear-gradient(#616161,#585858);"></div>
<svg style="left:734px;top:225px" width="16" height="16"><path d="M4.3 4.3 L11.7 11.7 M11.7 4.3 L4.3 11.7" stroke="#a6a6a6" stroke-width="2.3" fill="none"/></svg>
<div style="left:51px;top:276px;width:690px;height:328px;border:1px solid;border-color:#858585 #1c1c1c #1c1c1c #858585;"></div>
<div style="left:102px;top:258px;width:43px;height:18px;border:1px solid;border-color:#808080 #1c1c1c transparent #808080;border-bottom:0;border-radius:3px 3px 0 0;background:#626262;"></div>
<div style="left:145px;top:258px;width:65px;height:18px;border:1px solid;border-color:#808080 #1c1c1c transparent #808080;border-bottom:0;border-radius:3px 3px 0 0;background:#626262;"></div>
<div style="left:51px;top:255px;width:51px;height:22px;border:1px solid;border-color:#858585 #1c1c1c transparent #858585;border-bottom:0;border-radius:4px 4px 0 0;background:#646464;"></div>
<span class="t" style="left:62px;top:258px;font-size:11.8px;">JACK</span>
<span class="t" style="left:114px;top:259px;font-size:11.8px;">A2J</span>
<span class="t" style="left:157px;top:259px;font-size:11.7px;">LADISH</span>
<div style="left:63px;top:287px;width:667px;height:306px;background:#464646;border:1px solid;border-color:#000 #868686 #868686 #000;"></div>
<div style="left:64px;top:288px;width:648px;height:287px;overflow:hidden;">
<span class="t" style="left:4px;top:0px;line-height:14px;height:14px;font-size:12.37px;">Thu Feb 23 20:08:25 2017: <span style="color:#ff0000">ERROR: JackGraphManager::Connect already connected port_src = 26 port_dst = 2</span></span>
<span class="t" style="left:4px;top:14px;line-height:14px;height:14px;font-size:12.37px;">Thu Feb 23 20:08:25 2017: <span style="color:#ff0000">ERROR: jack_connect() failed with 17</span></span>
<span class="t" style="left:4px;top:28px;line-height:14px;height:14px;font-size:12.37px;">Thu Feb 23 20:08:29 2017: <span style="color:#ff00ff">Disconnecting 'TiMidity:port_1' from 'system:playback_1'</span></span>
<span class="t" style="left:4px;top:42px;line-height:14px;height:14px;font-size:12.37px;">Thu Feb 23 20:08:29 2017: <span style="color:#ff00ff">Disconnecting 'TiMidity:port_2' from 'system:playback_2'</span></span>
<span class="t" style="left:4px;top:56px;line-height:14px;height:14px;font-size:12.37px;">Thu Feb 23 20:08:30 2017: <span style="color:#ff0000">ERROR: Failed to find port 'TiMidity:port_1' to destroy</span></span>
<span class="t" style="left:4px;top:70px;line-height:14px;height:14px;font-size:12.37px;">Thu Feb 23 20:08:30 2017: <span style="color:#ff0000">ERROR: Failed to find port 'TiMidity:port_2' to destroy</span></span>
<span class="t" style="left:4px;top:84px;line-height:14px;height:14px;font-size:12.37px;">Thu Feb 23 20:08:30 2017: <span style="color:#dedede">Client 'TiMidity' with PID 3964 is out</span></span>
<span class="t" style="left:4px;top:98px;line-height:14px;height:14px;font-size:12.37px;">Thu Feb 23 20:08:30 2017: <span style="color:#dedede">New client 'TiMidity' with PID 3972</span></span>
<span class="t" style="left:4px;top:112px;line-height:14px;height:14px;font-size:12.37px;">Thu Feb 23 20:08:30 2017: <span style="color:#dedede">Client 'TiMidity' with PID 3972 is out</span></span>
<span class="t" style="left:4px;top:126px;line-height:14px;height:14px;font-size:12.37px;">Thu Feb 23 20:08:30 2017: <span style="color:#ff0000">ERROR: cannot find client 19</span></span>
<span class="t" style="left:4px;top:140px;line-height:14px;height:14px;font-size:12.37px;">Thu Feb 23 20:08:30 2017: <span style="color:#dedede">New client 'TiMidity' with PID 3972</span></span>
<span class="t" style="left:4px;top:154px;line-height:14px;height:14px;font-size:12.37px;">Thu Feb 23 20:08:31 2017: <span style="color:#0000ff">Connecting 'TiMidity:port_1' to 'system:playback_1'</span></span>
<span class="t" style="left:4px;top:168px;line-height:14px;height:14px;font-size:12.37px;">Thu Feb 23 20:08:31 2017: <span style="color:#0000ff">Connecting 'TiMidity:port_2' to 'system:playback_2'</span></span>
<span class="t" style="left:4px;top:182px;line-height:14px;height:14px;font-size:12.37px;">Thu Feb 23 20:08:31 2017: <span style="color:#ff0000">ERROR: JackGraphManager::Connect already connected port_src = 25 port_dst = 1</span></span>
<span class="t" style="left:4px;top:196px;line-height:14px;height:14px;font-size:12.37px;">Thu Feb 23 20:08:31 2017: <span style="color:#ff0000">ERROR: jack_connect() failed with 17</span></span>
<span class="t" style="left:4px;top:210px;line-height:14px;height:14px;font-size:12.37px;">Thu Feb 23 20:08:31 2017: <span style="color:#ff0000">ERROR: JackGraphManager::Connect already connected port_src = 25 port_dst = 1</span></span>
<span class="t" style="left:4px;top:224px;line-height:14px;height:14px;font-size:12.37px;">Thu Feb 23 20:08:31 2017: <span style="color:#ff0000">ERROR: jack_connect() failed with 17</span></span>
<span class="t" style="left:4px;top:238px;line-height:14px;height:14px;font-size:12.37px;">Thu Feb 23 20:08:31 2017: <span style="color:#ff0000">ERROR: JackGraphManager::Connect already connected port_src = 26 port_dst = 2</span></span>
<span class="t" style="left:4px;top:252px;line-height:14px;height:14px;font-size:12.37px;">Thu Feb 23 20:08:31 2017: <span style="color:#ff0000">ERROR: jack_connect() failed with 17</span></span>
</div>
<div class="trough" style="left:712px;top:288px;width:16px;height:287px;"></div>
<div class="sbtn" style="left:712px;top:288px;width:16px;height:16px;"></div>
<svg style="left:712px;top:288px" width="16" height="16"><path d="M4 10 L7.5 5.7 L11 10 Z" fill="#ececec"/></svg>
<div class="sbtn" style="left:712px;top:559px;width:16px;height:16px;"></div>
<svg style="left:712px;top:559px" width="16" height="16"><path d="M4 6 L7.5 10.3 L11 6 Z" fill="#ececec"/></svg>
<div class="sbtn" style="left:712px;top:551px;width:16px;height:8px;"></div>
<div class="trough" style="left:64px;top:575px;width:648px;height:16px;"></div>
<div class="sbtn" style="left:64px;top:575px;width:16px;height:16px;"></div>
<svg style="left:64px;top:575px" width="16" height="16"><path d="M9.8 4 L5.5 7.5 L9.8 11 Z" fill="#ececec"/></svg>
<div class="sbtn" style="left:696px;top:575px;width:16px;height:16px;"></div>
<svg style="left:696px;top:575px" width="16" height="16"><path d="M6 4 L10.3 7.5 L6 11 Z" fill="#ececec"/></svg>
<div class="sbtn" style="left:80px;top:575px;width:346px;height:16px;"></div>
<div style="left:712px;top:575px;width:16px;height:16px;background:#666;"></div>
<div style="left:51px;top:610px;width:690px;height:1px;background:#4a4a4a;"></div>
<div style="left:51px;top:611px;width:690px;height:1px;background:#7c7c7c;"></div>
<div style="left:500px;top:619px;width:158px;height:28px;border:1px solid #0a0a0a;"></div>
<div class="tb" style="left:501px;top:620px;width:156px;height:26px;"></div>
<svg style="left:506px;top:625px" width="17" height="17" viewBox="0 0 17 17"><path d="M2 3 V14 Q8.5 17 15 14 V3 Z" fill="#e6e6e6"/><ellipse cx="8.5" cy="3" rx="6.5" ry="2.2" fill="#fafafa" stroke="#bdbdbd" stroke-width="0.6"/><ellipse cx="8.5" cy="3.1" rx="4.6" ry="1.2" fill="#8a8a8a"/><path d="M4 6 V14.5" stroke="#fff" stroke-width="1.5"/><path d="M12.5 6 V14.5" stroke="#c4c4c4" stroke-width="2"/></svg>
<span class="t" style="left:526px;top:625px;letter-spacing:0.14px;">Purger tous les logs</span>
<div class="tb" style="left:665px;top:620px;width:75px;height:26px;"></div>
<svg style="left:671px;top:625px" width="16" height="16" viewBox="0 0 16 16"><circle cx="8" cy="8" r="7.2" fill="#d81414" stroke="#8a0c0c" stroke-width="0.8"/><path d="M5 5 L11 11 M11 5 L5 11" stroke="#fff" stroke-width="2.1" stroke-linecap="round"/></svg>
<span class="t" style="left:690px;top:625px;">Fermer</span>
<div style="left:998px;top:25px;width:641px;height:443px;background:#666;border-radius:6px 6px 0 0;box-shadow:5px 3px 12px 3px rgba(0,0,0,0.5);border:1px solid #3a3a3a;"></div>
<div style="left:999px;top:26px;width:639px;height:20px;background:linear-gradient(#474747,#525252);border-radius:5px 5px 0 0;"></div>
<div style="left:999px;top:46px;width:639px;height:1px;background:#3e3e3e;"></div>
<span class="t" style="left:1198px;width:200px;text-align:center;top:29px;font-weight:bold;color:#f2f2f2;font-size:12.95px;">Solfege - Tierces</span>
<div style="left:1597px;top:28px;width:16px;height:16px;border:1px solid #2e2e2e;border-radius:3px;background:linear-gradient(#4e4e4e,#585858);"></div>
<svg style="left:1597px;top:28px" width="16" height="16"><rect x="4" y="9.5" width="8" height="2.2" fill="#f0f0f0"/></svg>
<div style="left:1617px;top:28px;width:16px;height:16px;border:1px solid #2e2e2e;border-radius:3px;background:linear-gradient(#4e4e4e,#585858);"></div>
<svg style="left:1617px;top:28px" width="16" height="16"><path d="M4 4 L12 12 M12 4 L4 12" stroke="#ececec" stroke-width="2.2" fill="none"/></svg>
<div style="left:999px;top:47px;width:639px;height:22px;background:#676767;"></div>
<div style="left:999px;top:69px;width:636px;height:1px;background:#505050;"></div>
<svg style="left:1005px;top:50px" width="5" height="17"><g fill="#4c4c4c"><rect x="0" y="0" width="1" height="1"/><rect x="3" y="0" width="1" height="1"/><rect x="0" y="2" width="1" height="1"/><rect x="3" y="2" width="1" height="1"/><rect x="0" y="4" width="1" height="1"/><rect x="3" y="4" width="1" height="1"/><rect x="0" y="6" width="1" height="1"/><rect x="3" y="6" width="1" height="1"/><rect x="0" y="8" width="1" height="1"/><rect x="3" y="8" width="1" height="1"/><rect x="0" y="10" width="1" height="1"/><rect x="3" y="10" width="1" height="1"/><rect x="0" y="12" width="1" height="1"/><rect x="3" y="12" width="1" height="1"/><rect x="0" y="14" width="1" height="1"/><rect x="3" y="14" width="1" height="1"/></g></svg>
<span class="t" style="left:1020px;top:51px;"><u>F</u>ichier</span>
<span class="t" style="left:1074px;top:51px;"><u>A</u>ide</span>
<div style="left:1002px;top:98px;width:633px;height:366px;background:#666;border:1px solid #4c4c4c;border-radius:0 4px 4px 4px;"></div>
<div style="left:1076px;top:74px;width:97px;height:24px;background:#595959;border:1px solid;border-color:#747474 #444 transparent #666;border-bottom:0;border-radius:3px 3px 0 0;"></div>
<div style="left:1173px;top:74px;width:88px;height:24px;background:#595959;border:1px solid;border-color:#747474 #444 transparent #666;border-bottom:0;border-radius:3px 3px 0 0;"></div>
<span class="t" style="left:1081px;top:79px;font-size:12.6px;">Configuration</span>
<span class="t" style="left:1178px;top:79px;font-size:12.6px;">Statistiques</span>
<div style="left:1002px;top:70px;width:74px;height:29px;background:#656565;border:1px solid;border-color:#7e7e7e #454545 transparent #7e7e7e;border-bottom:0;border-radius:4px 4px 0 0;"></div>
<div style="left:1003px;top:71px;width:72px;height:3px;background:#4c4c4c;border-radius:3px 3px 0 0;"></div>
<span class="t" style="left:1009px;top:77px;font-size:12.75px;">Exercices</span>
<span class="t" style="left:1118px;width:400px;text-align:center;top:129px;font-weight:bold;font-size:15px;line-height:20px;height:20px;top:126px;">Identifier l'intervalle</span>
<div class="gbtn" style="left:1014px;top:172px;width:146px;height:33px;"></div>
<span class="t dis2" style="left:1014px;width:146px;text-align:center;top:181px;font-size:12.8px;">Seconde mineure</span>
<div class="gbtn" style="left:1162px;top:172px;width:146px;height:33px;"></div>
<span class="t dis2" style="left:1162px;width:146px;text-align:center;top:181px;font-size:12.8px;">Seconde majeure</span>
<div class="gbtn" style="left:1310px;top:172px;width:143px;height:33px;border-color:#303030;box-shadow:inset 0 1px 0 #7c7c7c,0 0 0 1px #565656;"></div>
<span class="t" style="left:1310px;width:143px;text-align:center;top:181px;font-size:12.8px;">Tierce mineure</span>
<div class="gbtn" style="left:1455px;top:172px;width:168px;height:33px;"></div>
<span class="t" style="left:1455px;width:168px;text-align:center;top:181px;font-size:12.8px;">Tierce majeure</span>
<div class="gbtn" style="left:1014px;top:207px;width:146px;height:33px;"></div>
<span class="t dis2" style="left:1014px;width:146px;text-align:center;top:216px;font-size:12.8px;">Quarte juste</span>
<div class="gbtn" style="left:1162px;top:207px;width:146px;height:33px;"></div>
<span class="t dis2" style="left:1162px;width:146px;text-align:center;top:216px;font-size:12.8px;">Triton</span>
<div class="gbtn" style="left:1310px;top:207px;width:143px;height:33px;"></div>
<span class="t dis2" style="left:1310px;width:143px;text-align:center;top:216px;font-size:12.8px;">Quinte juste</span>
<div class="gbtn" style="left:1455px;top:207px;width:168px;height:33px;"></div>
<span class="t dis2" style="left:1455px;width:168px;text-align:center;top:216px;font-size:12.8px;">Sixte mineure</span>
<div class="gbtn" style="left:1014px;top:242px;width:146px;height:33px;"></div>
<span class="t dis2" style="left:1014px;width:146px;text-align:center;top:251px;font-size:12.8px;">Sixte majeure</span>
<div class="gbtn" style="left:1162px;top:242px;width:146px;height:33px;"></div>
<span class="t dis2" style="left:1162px;width:146px;text-align:center;top:251px;font-size:12.8px;">Septième mineure</span>
<div class="gbtn" style="left:1310px;top:242px;width:143px;height:33px;"></div>
<span class="t dis2" style="left:1310px;width:143px;text-align:center;top:251px;font-size:12.8px;">Septième majeure</span>
<div class="gbtn" style="left:1455px;top:242px;width:168px;height:33px;"></div>
<span class="t dis2" style="left:1455px;width:168px;text-align:center;top:251px;font-size:12.8px;">Octave juste</span>
<div class="gbtn" style="left:1014px;top:277px;width:146px;height:33px;"></div>
<span class="t dis2" style="left:1014px;width:146px;text-align:center;top:286px;font-size:12.8px;">Neuvième mineure</span>
<div class="gbtn" style="left:1162px;top:277px;width:146px;height:33px;"></div>
<span class="t dis2" style="left:1162px;width:146px;text-align:center;top:286px;font-size:12.8px;">Neuvième majeure</span>
<div class="gbtn" style="left:1310px;top:277px;width:143px;height:33px;"></div>
<span class="t dis2" style="left:1310px;width:143px;text-align:center;top:286px;font-size:12.8px;">Dixième mineure</span>
<div class="gbtn" style="left:1455px;top:277px;width:168px;height:33px;"></div>
<span class="t dis2" style="left:1455px;width:168px;text-align:center;top:286px;font-size:12.8px;">Dixième majeure</span>
<div class="gbtn" style="left:1014px;top:312px;width:146px;height:33px;"></div>
<span class="t dis2" style="left:1014px;width:146px;text-align:center;top:321px;font-size:12.8px;">Perfect Eleventh</span>
<div class="gbtn" style="left:1162px;top:312px;width:146px;height:33px;"></div>
<span class="t dis2" style="left:1162px;width:146px;text-align:center;top:321px;font-size:12.8px;">Octave + Tritone</span>
<div class="gbtn" style="left:1310px;top:312px;width:143px;height:33px;"></div>
<span class="t dis2" style="left:1310px;width:143px;text-align:center;top:321px;font-size:12.8px;">Perfect Twelfth</span>
<div class="gbtn" style="left:1455px;top:312px;width:168px;height:33px;"></div>
<span class="t dis2" style="left:1455px;width:168px;text-align:center;top:321px;font-size:12.8px;">Minor Thirteenth</span>
<div class="gbtn" style="left:1014px;top:347px;width:146px;height:33px;"></div>
<span class="t dis2" style="left:1014px;width:146px;text-align:center;top:356px;font-size:12.8px;">Major Thirteenth</span>
<div class="gbtn" style="left:1162px;top:347px;width:146px;height:33px;"></div>
<span class="t dis2" style="left:1162px;width:146px;text-align:center;top:356px;font-size:12.8px;">Minor Fourteenth</span>
<div class="gbtn" style="left:1310px;top:347px;width:143px;height:33px;"></div>
<span class="t dis2" style="left:1310px;width:143px;text-align:center;top:356px;font-size:12.8px;">Major Fourteenth</span>
<div class="gbtn" style="left:1455px;top:347px;width:168px;height:33px;"></div>
<span class="t dis2" style="left:1455px;width:168px;text-align:center;top:356px;font-size:12.8px;">Perfect Double Octave</span>
<div style="left:1013px;top:389px;width:611px;height:29px;border:1px solid #404040;background:#696969;"></div>
<div class="gbtn" style="left:1014px;top:427px;width:230px;height:25px;"></div>
<span class="t dis2" style="left:1014px;width:230px;text-align:center;top:432px;"><u>N</u>ouvel intervalle</span>
<div class="gbtn" style="left:1246px;top:427px;width:171px;height:25px;border-color:#303030;"></div>
<span class="t" style="left:1246px;width:171px;text-align:center;top:432px;"><u>R</u>ejouer</span>
<div class="gbtn" style="left:1419px;top:427px;width:204px;height:25px;"></div>
<span class="t dis2" style="left:1419px;width:204px;text-align:center;top:432px;"><u>A</u>bandonner</span>
<span class="t" style="left:11px;top:993px;letter-spacing:-0.12px;">Taille du tampon :</span>
<div style="left:127px;top:991px;width:72px;height:19px;background:#454545;border:1px solid #1a1a1a;box-shadow:inset 1px 1px 0 #141414;"></div>
<div class="sbtn" style="left:182px;top:993px;width:15px;height:15px;"></div>
<svg style="left:182px;top:993px" width="15" height="15"><path d="M3.5 5.5 L7.5 10 L11.5 5.5 Z" fill="#ececec"/></svg>
<span class="t" style="left:131px;top:993px;">128</span>
<div style="left:207px;top:989px;width:1px;height:24px;background:#4c4c4c;"></div>
<div style="left:208px;top:989px;width:1px;height:24px;background:#787878;"></div>
<span class="t" style="left:216px;top:993px;letter-spacing:-0.12px;">Taux d'échantillonnage :</span>
<div style="left:372px;top:991px;width:77px;height:19px;background:#454545;border:1px solid #1a1a1a;box-shadow:inset 1px 1px 0 #141414;"></div>
<div class="sbtn" style="left:432px;top:993px;width:15px;height:15px;"></div>
<svg style="left:432px;top:993px" width="15" height="15"><path d="M3.5 5.5 L7.5 10 L11.5 5.5 Z" fill="#ececec"/></svg>
<span class="t" style="left:376px;top:993px;">44100</span>
<div style="left:457px;top:989px;width:1px;height:24px;background:#4c4c4c;"></div>
<div style="left:458px;top:989px;width:1px;height:24px;background:#787878;"></div>
<span class="t" style="left:470px;top:993px;">RT</span>
<div style="left:494px;top:989px;width:1px;height:24px;background:#4c4c4c;"></div>
<div style="left:495px;top:989px;width:1px;height:24px;background:#787878;"></div>
<span class="t" style="left:513px;top:993px;">22 Xruns</span>
<div style="left:584px;top:989px;width:1px;height:24px;background:#4c4c4c;"></div>
<div style="left:585px;top:989px;width:1px;height:24px;background:#787878;"></div>
<div style="left:592px;top:990px;width:965px;height:22px;border:1px solid;border-color:#4e4e4e #7a7a7a #7a7a7a #4e4e4e;"></div>
<span class="t" style="left:1560px;top:993px;">Charge DSP : 0%</span>
<div style="left:0px;top:1024px;width:1680px;height:1px;background:#3a3a3a;"></div>
<div style="left:0px;top:1025px;width:1680px;height:1px;background:#505050;"></div>
<div style="left:0px;top:1026px;width:1680px;height:24px;background:#606060;"></div>
<div class="task" style="left:1px;top:1027px;width:21px;height:22px;"></div>
<svg style="left:3px;top:1029px" width="18" height="18" viewBox="0 0 18 18"><rect x="1" y="2" width="16" height="14" fill="#3a5a8c" stroke="#27406a" stroke-width="1"/><ellipse cx="9" cy="9" rx="6.5" ry="4.8" fill="#c8ccaa"/><path d="M1.5 2.5 L5 6 M16.5 2.5 L13 6 M1.5 15.5 L5 12 M16.5 15.5 L13 12" stroke="#9ab0d0" stroke-width="1.2"/></svg>
<svg style="left:27px;top:1029px" width="6" height="20"><g fill="#4a4a4a"><rect x="0" y="1" width="1" height="1"/><rect x="3" y="3" width="1" height="1"/><rect x="0" y="5" width="1" height="1"/><rect x="3" y="7" width="1" height="1"/><rect x="0" y="9" width="1" height="1"/><rect x="3" y="11" width="1" height="1"/><rect x="0" y="13" width="1" height="1"/><rect x="3" y="15" width="1" height="1"/><rect x="0" y="17" width="1" height="1"/></g></svg>
<div class="task" style="left:35px;top:1027px;width:187px;height:22px;"></div>
<svg style="left:42px;top:1030px" width="16" height="16" viewBox="0 0 16 16"><path d="M2 5 L8 2.5 L14 5 V13 L8 15.5 L2 13 Z" fill="#d8d8d8" stroke="#777" stroke-width="0.7"/><path d="M2 5 L8 7.5 L14 5 M8 7.5 V15.5" stroke="#888" stroke-width="0.7" fill="none"/><path d="M5 3.7 L11 6.2 V9.5" stroke="#c03030" stroke-width="1.6" fill="none"/><path d="M4 1 L9 0.5 L10 3 L5 4 Z" fill="#3a3a3a"/><circle cx="12" cy="11.5" r="2.6" fill="#e88aa8"/><circle cx="4.5" cy="11" r="2" fill="#f0f0f0"/></svg>
<span class="t" style="left:66px;top:1030px;font-size:12.7px;">Gestionnaire de paq...</span>
<div class="task" style="left:224px;top:1027px;width:187px;height:22px;"></div>
<svg style="left:231px;top:1030px" width="16" height="16" viewBox="0 0 16 16"><rect x="1.5" y="1" width="13" height="14" rx="1.2" fill="#8a0404" stroke="#6e3208" stroke-width="0.7"/><g fill="#4a6ea6"><circle cx="8" cy="4.6" r="1.7"/><circle cx="4.4" cy="11.2" r="1.7"/><circle cx="11.6" cy="11.2" r="1.7"/><circle cx="8" cy="8.6" r="1.8"/><path d="M7 4.6 L8 8.6 L9 4.6 Z M3.8 10 L8 8.6 L5.4 12.2 Z M12.2 10 L8 8.6 L10.6 12.2 Z"/></g></svg>
<span class="t" style="left:255px;top:1030px;font-size:12.7px;">Cadence</span>
<div class="task" style="left:413px;top:1027px;width:187px;height:22px;"></div>
<svg style="left:420px;top:1030px" width="16" height="16" viewBox="0 0 16 16"><rect x="1.5" y="1" width="13" height="14" rx="1.2" fill="#8a0404" stroke="#6e3208" stroke-width="0.7"/><g fill="#4a6ea6"><circle cx="8" cy="4.6" r="1.7"/><circle cx="4.4" cy="11.2" r="1.7"/><circle cx="11.6" cy="11.2" r="1.7"/><circle cx="8" cy="8.6" r="1.8"/><path d="M7 4.6 L8 8.6 L9 4.6 Z M3.8 10 L8 8.6 L5.4 12.2 Z M12.2 10 L8 8.6 L10.6 12.2 Z"/></g></svg>
<span class="t" style="left:444px;top:1030px;font-size:12.7px;">Logs</span>
<div class="task" style="left:602px;top:1027px;width:187px;height:22px;"></div>
<svg style="left:609px;top:1030px" width="16" height="16" viewBox="0 0 16 16"><rect x="1.5" y="1" width="13" height="14" rx="1.2" fill="#8a0404" stroke="#6e3208" stroke-width="0.7"/><path d="M3.5 4 L8.5 7 L6.5 9.5 L12.5 12.5" stroke="#5a6a8a" stroke-width="1.5" fill="none"/><circle cx="4" cy="4.2" r="1.5" fill="#3c3c3c"/><circle cx="12" cy="12" r="1.5" fill="#3c3c3c"/></svg>
<span class="t" style="left:633px;top:1030px;font-size:12.7px;">Catia</span>
<div style="left:791px;top:1027px;width:187px;height:22px;border:1px solid #2c2c2c;border-radius:3px;background:linear-gradient(#4a4a4a,#565656);"></div>
<svg style="left:798px;top:1031px" width="16" height="16" viewBox="0 0 16 16"><circle cx="6" cy="10.5" r="3.6" fill="none" stroke="#2a2a4a" stroke-width="1.4"/><circle cx="6" cy="10.5" r="1.4" fill="#8a8ab8"/><path d="M9.3 10 V2.5 L13 5.5" stroke="#3a3a6a" stroke-width="1.4" fill="none"/><path d="M11 7 Q14 4 12 2" stroke="#6a6aa0" stroke-width="1" fill="none"/></svg>
<span class="t" style="left:823px;top:1031px;font-size:12.7px;">Solfege - Tierces</span>
<div class="task" style="left:980px;top:1027px;width:187px;height:22px;"></div>
<svg style="left:987px;top:1030px" width="16" height="16" viewBox="0 0 16 16"><rect x="1.5" y="1" width="13" height="14" rx="1.2" fill="#8a0404" stroke="#6e3208" stroke-width="0.7"/><ellipse cx="7.6" cy="11" rx="4.6" ry="2.5" fill="none" stroke="#3c1c10" stroke-width="1"/><path d="M9 3 V10.5" stroke="#5c86b8" stroke-width="1.3"/><ellipse cx="7.2" cy="10.6" rx="2.3" ry="1.4" fill="#4f78ac"/></svg>
<span class="t" style="left:1011px;top:1030px;font-size:12.7px;">Claudia</span>
<div style="left:1546px;top:1027px;width:133px;height:23px;background:#404040;border-radius:0 4px 4px 0;"></div>
<div style="left:1547px;top:1028px;width:31px;height:21px;background:#585858;"></div>
<svg style="left:1547px;top:1028px" width="33" height="22" viewBox="0 0 33 22">
<rect x="9.5" y="2" width="12.5" height="13.5" rx="1.5" fill="#8c0808" stroke="#8a5a10" stroke-width="0.6"/>
<path d="M16.6 4 V11.5" stroke="#5c86b8" stroke-width="1.3"/><ellipse cx="15" cy="11.6" rx="2" ry="1.2" fill="#4f78ac"/>
<rect x="19.6" y="0.6" width="11" height="6" fill="#6c6c6c" stroke="#fff" stroke-width="1.2"/>
<rect x="0.6" y="4.6" width="14" height="6.6" fill="#585858" stroke="#fff" stroke-width="1.2"/>
<rect x="0.6" y="0.6" width="30.6" height="19" fill="none" stroke="#fff" stroke-width="1.2"/>
<path d="M10 20.4 H31.8" stroke="#fff" stroke-width="1.4"/>
</svg>
<div style="left:1612px;top:1028px;width:1px;height:21px;background:#6a6a6a;"></div>
<div style="left:1645px;top:1028px;width:1px;height:21px;background:#6a6a6a;"></div>
<div style="left:0px;top:0px;width:1680px;height:24px;background:#606060;"></div>
<div style="left:0px;top:24px;width:1680px;height:1px;background:#353535;"></div>
<div style="left:0px;top:25px;width:1680px;height:1px;background:#4c4c4c;"></div>
<svg style="left:8px;top:1px" width="22" height="22" viewBox="0 0 22 22">
<defs><radialGradient id="lzg" cx="50%" cy="50%" r="60%"><stop offset="0" stop-color="#c8c8c8"/><stop offset="0.6" stop-color="#a0a0a0"/><stop offset="1" stop-color="#707070"/></radialGradient></defs>
<rect width="22" height="22" fill="url(#lzg)"/>
<circle cx="11" cy="10" r="7.5" fill="none" stroke="#3a3ad0" stroke-width="1.2" opacity="0.8"/>
<path d="M12.3 1.5 L12.3 17 M12.3 1.5 C14 5 17 6 17.5 10 " stroke="#1a1a1a" stroke-width="1.3" fill="none"/>
<ellipse cx="6.5" cy="18.8" rx="3.2" ry="2.5" fill="#222"/><path d="M9.5 18.5 L12.3 16" stroke="#222" stroke-width="1.5"/>
<text x="0.3" y="15" font-family="DejaVu Sans, sans-serif" font-weight="bold" font-size="10.5" fill="#0000ff" textLength="21" lengthAdjust="spacingAndGlyphs">LZK</text>
</svg>
<span class="t" style="left:36px;top:4px;">Logiciels</span>
<span class="t" style="left:104px;top:4px;">Répertoires</span>
<span class="t" style="left:190px;top:4px;">Système</span>
<svg style="left:1475px;top:3px" width="5" height="18"><g fill="#4a4a4a"><rect x="0" y="1" width="1" height="1"/><rect x="3" y="3" width="1" height="1"/><rect x="0" y="5" width="1" height="1"/><rect x="3" y="7" width="1" height="1"/><rect x="0" y="9" width="1" height="1"/><rect x="3" y="11" width="1" height="1"/><rect x="0" y="13" width="1" height="1"/><rect x="3" y="15" width="1" height="1"/></g></svg>
<svg style="left:1484px;top:1px" width="19" height="20" viewBox="0 0 19 20"><defs><linearGradient id="rb" x1="0" y1="0" x2="0.6" y2="1"><stop offset="0" stop-color="#c40808"/><stop offset="1" stop-color="#6e0404"/></linearGradient></defs><rect x="0.5" y="0.5" width="18" height="19" rx="2" fill="url(#rb)" stroke="#7a2a0a" stroke-width="1"/>
<path d="M3 1 H16 M3 19 H16" stroke="#a8741a" stroke-width="0.8" opacity="0.8"/>
<ellipse cx="9" cy="13.4" rx="6" ry="3.2" fill="none" stroke="#4a2418" stroke-width="1.1"/>
<path d="M10.8 3.5 V13" stroke="#5c86b8" stroke-width="1.5"/><ellipse cx="8.3" cy="12.8" rx="3.1" ry="1.9" fill="#4f78ac"/>
<path d="M13.5 15 L15.2 13.6 L15.4 15.8 Z" fill="#4a2418"/></svg>
<svg style="left:1507px;top:1px" width="19" height="20" viewBox="0 0 19 20"><rect x="0.5" y="0.5" width="18" height="19" rx="2" fill="url(#rb)" stroke="#7a2a0a" stroke-width="1"/>
<path d="M3 1 H16 M3 19 H16" stroke="#a8741a" stroke-width="0.8" opacity="0.8"/>
<g fill="#4f78ac" stroke="none"><circle cx="9.5" cy="5" r="2.1"/><circle cx="4.2" cy="14.2" r="2.1"/><circle cx="14.8" cy="14.2" r="2.1"/><circle cx="9.5" cy="10.8" r="2.3"/>
<path d="M8 5 L9.5 10.8 L11 5 Z"/><path d="M3.4 12.6 L9.5 10.8 L5.4 15.6 Z"/><path d="M15.6 12.6 L9.5 10.8 L13.6 15.6 Z"/></g>
<circle cx="9.5" cy="10.8" r="1" fill="#35558a"/></svg>
<div style="left:1505px;top:22px;width:22px;height:2px;background:#0a0a0a;"></div>
<svg style="left:1530px;top:2px" width="22" height="18" viewBox="0 0 22 18">
<path d="M2.5 3.5 L5.5 1 L16 9.5 L13 13 Z" fill="#f4f4f4" stroke="#b4b4b4" stroke-width="0.5"/>
<path d="M4 5 L14 12 M5 3.4 L15.2 10.6" stroke="#c8c8c8" stroke-width="0.8"/>
<path d="M2.5 3.5 L5.5 1 L7 2.2 L4 4.8 Z" fill="#f0c040"/>
<path d="M13 13 L16 9.5 L18.5 13 L16.5 15 Z" fill="#9a9a9a"/><path d="M16.8 13.4 L19.6 16.2" stroke="#4a4a4a" stroke-width="1.8" stroke-linecap="round"/></svg>
<span class="t" style="left:1558px;top:4px;">jeu. 23 févr., 20:08</span>
</div></body></html>
